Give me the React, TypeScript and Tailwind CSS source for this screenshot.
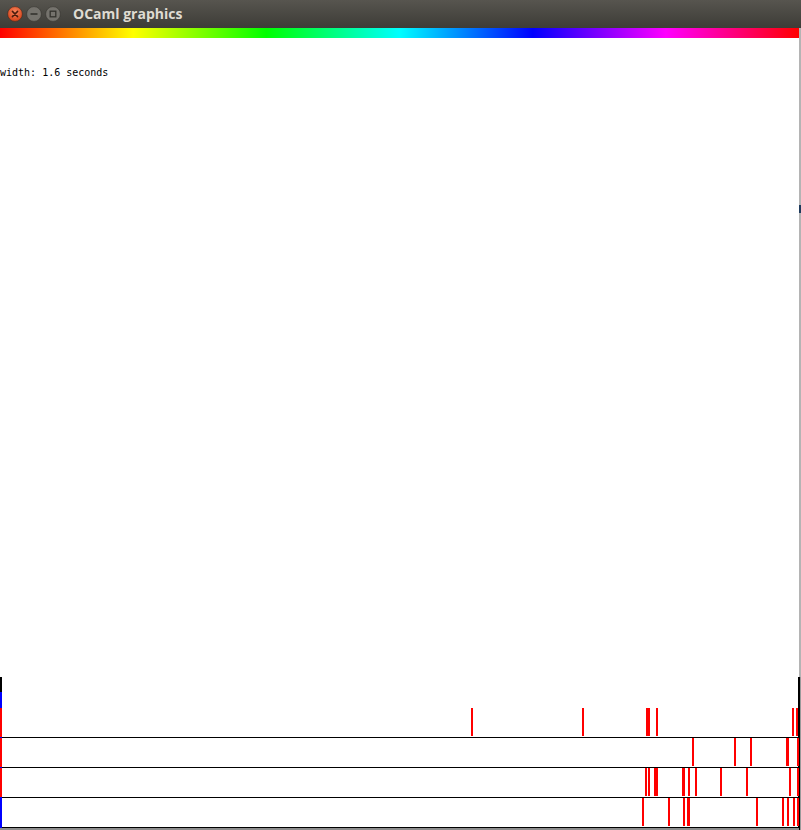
import React from 'react';

type Bar = { x: number; w: number };

// red ticks per row, x in window pixels
const rows: { marker: string; bars: Bar[] }[] = [
  {
    marker: 'bg-[#ff0000]',
    bars: [
      { x: 471, w: 2 },
      { x: 582, w: 2 },
      { x: 646, w: 4 },
      { x: 656, w: 2 },
      { x: 792, w: 2 },
      { x: 796, w: 2 },
    ],
  },
  {
    marker: 'bg-[#ff0000]',
    bars: [
      { x: 692, w: 2 },
      { x: 734, w: 2 },
      { x: 750, w: 2 },
      { x: 786, w: 3 },
      { x: 797, w: 2 },
    ],
  },
  {
    marker: 'bg-[#ff0000]',
    bars: [
      { x: 645, w: 2 },
      { x: 648, w: 2 },
      { x: 654, w: 4 },
      { x: 682, w: 3 },
      { x: 688, w: 2 },
      { x: 695, w: 2 },
      { x: 720, w: 2 },
      { x: 746, w: 2 },
      { x: 789, w: 2 },
      { x: 797, w: 2 },
    ],
  },
  {
    marker: 'bg-[#0000ff]',
    bars: [
      { x: 642, w: 2 },
      { x: 668, w: 2 },
      { x: 683, w: 2 },
      { x: 687, w: 3 },
      { x: 756, w: 2 },
      { x: 782, w: 2 },
      { x: 787, w: 2 },
      { x: 793, w: 2 },
      { x: 797, w: 2 },
    ],
  },
];

const WindowButtons: React.FC = () => (
  <div className="flex items-center gap-[3px] pl-[7px]">
    <svg width="16" height="16" viewBox="0 0 16 16">
      <defs>
        <radialGradient id="cl" cx="50%" cy="35%" r="60%">
          <stop offset="0%" stopColor="#f7855c" />
          <stop offset="100%" stopColor="#d8461c" />
        </radialGradient>
      </defs>
      <circle cx="8" cy="8" r="7.4" fill="url(#cl)" stroke="#3a2a22" strokeWidth="0.6" />
      <path d="M5.4 5.4 L10.6 10.6 M10.6 5.4 L5.4 10.6" stroke="#4a1c0c" strokeWidth="1.5" strokeLinecap="round" />
    </svg>
    <svg width="16" height="16" viewBox="0 0 16 16">
      <circle cx="8" cy="8" r="7.4" fill="#75736d" stroke="#35342f" strokeWidth="0.6" />
      <path d="M4.5 8 L11.5 8" stroke="#34332e" strokeWidth="1.6" />
    </svg>
    <svg width="16" height="16" viewBox="0 0 16 16">
      <circle cx="8" cy="8" r="7.4" fill="#75736d" stroke="#35342f" strokeWidth="0.6" />
      <rect x="5.2" y="5.2" width="5.6" height="5.6" fill="none" stroke="#34332e" strokeWidth="1.3" />
    </svg>
  </div>
);

const App: React.FC = () => {
  return (
    <div className="flex flex-col w-[801px] h-[830px] bg-white overflow-hidden">
      {/* title bar */}
      <div className="flex items-center h-[28px] bg-gradient-to-b from-[#57554f] to-[#3d3c37]">
        <WindowButtons />
        <span className="ml-[12px] font-bold text-[#dfdbd2] text-[14px] leading-none" style={{ fontFamily: '"Open Sans", "DejaVu Sans", sans-serif' }}>
          OCaml graphics
        </span>
      </div>

      <div className="flex flex-1">
        <div className="flex flex-col w-[799px]">
          {/* hue strip */}
          <div className="h-[10px] bg-[linear-gradient(to_right,#ff0000_0%,#ffff00_16.67%,#00ff00_33.33%,#00ffff_50%,#0000ff_66.67%,#ff00ff_83.33%,#ff0000_100%)]" />

          {/* canvas */}
          <div className="flex-1 bg-white">
            <p className="mt-[29px] text-black text-[10px] leading-[12px]" style={{ fontFamily: '"DejaVu Sans Mono", monospace' }}>
              width: 1.6 seconds
            </p>
          </div>

          {/* timeline */}
          <div className="flex flex-col border-r border-black">
            <div className="flex flex-col w-[2px] h-[31px]">
              <div className="bg-black h-[15px]" />
              <div className="flex-1 bg-[#0000ff]" />
            </div>
            {rows.map((row, i) => (
              <div key={i} className="flex flex-col">
                <div className="relative flex h-[29px]">
                  <div className={`w-[2px] h-full ${row.marker}`} />
                  {row.bars.map((b, j) => (
                    <div
                      key={j}
                      className="top-0 absolute bg-[#ff0000] h-[28px]"
                      style={{ left: b.x, width: b.w }}
                    />
                  ))}
                </div>
                <div className="flex h-px">
                  <div className="bg-[#0000ff] w-[2px]" />
                  <div className="flex-1 bg-black" />
                </div>
              </div>
            ))}
          </div>
          <div className="bg-[#8e8e8e] h-[2px]" />
        </div>

        {/* window edge */}
        <div className="flex flex-col w-[2px]">
          <div className="bg-[#b4b4b4] h-[177px]" />
          <div className="bg-[#1e3a5c] h-[8px]" />
          <div className="flex-1 bg-[#b4b4b4]" />
          <div className="flex h-[153px]">
            <div className="bg-black w-px" />
            <div className="bg-[#9a9a9a] w-px" />
          </div>
        </div>
      </div>
    </div>
  );
};

export default App;
